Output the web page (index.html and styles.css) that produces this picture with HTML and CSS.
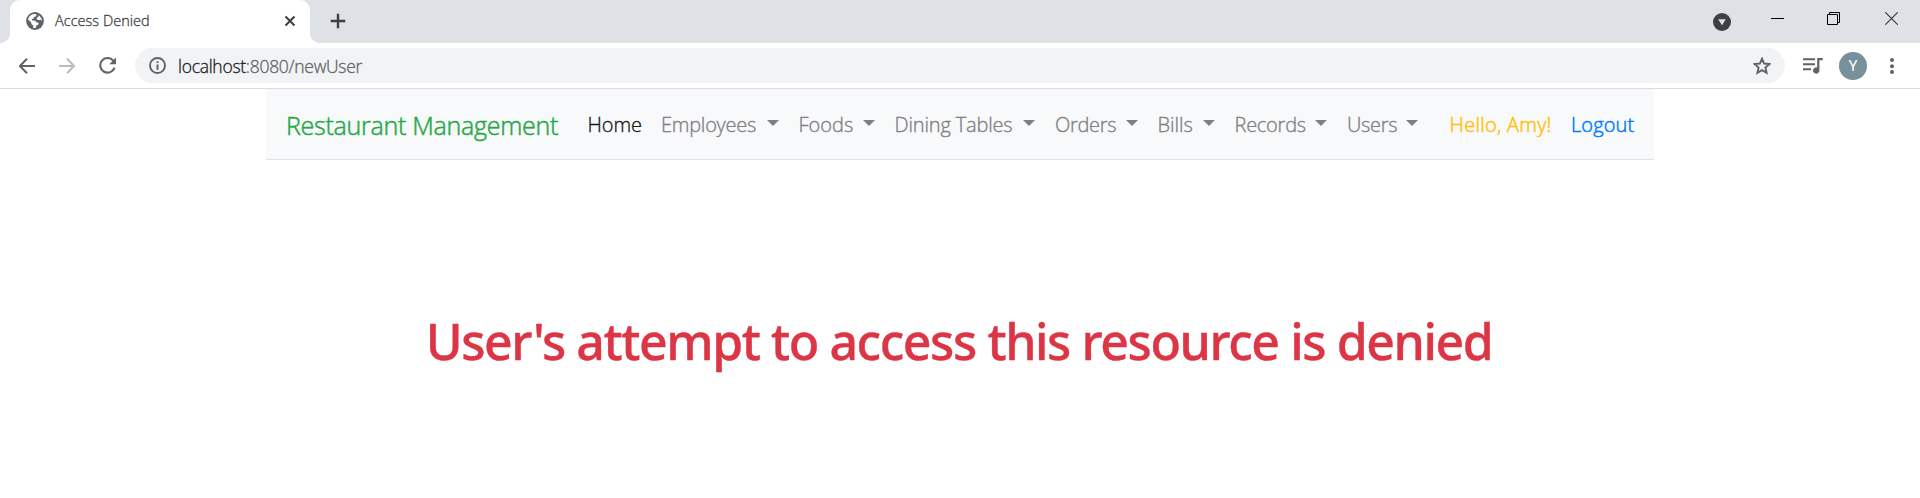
FILE: index.html
```
<!DOCTYPE html>
<html lang="en">
<head>
<meta charset="utf-8">
<title>Access Denied</title>
<link rel="stylesheet" href="styles.css">
</head>
<body>
<header class="tabstrip">
  <div class="corner corner-left"></div>
  <div class="tab">
    <svg class="globe" viewBox="0 0 18 18"><circle cx="9" cy="9" r="8.9" fill="#5f6368"/><path d="M7.300 2.100 10 1.900C10.600 2.900 10.500 4 9.500 4.400L8 4.900 7.600 6.400 5.600 7.200 6.200 8.500 9.300 8.700 10.800 10.600 12.700 10.800 12.300 12.400 10.500 13.400 9.600 15.900C8.600 16.100 8 16 7.200 15.900L7.300 13.600 5.400 12 5.200 10.300 2 7.600C2.600 4.800 4.600 2.700 7.300 2.100ZM12.300 3.200C14.500 4.400 16 6.600 16 9L14.600 7.400 12.300 8.300 10.500 7 11.200 5.500 12.500 5Z" fill="#fff"/></svg>
    <span class="tab-title">Access Denied</span>
    <svg class="tab-close" viewBox="0 0 12 12"><path d="M1.500 1.500 10.500 10.500M10.500 1.500 1.500 10.500" stroke="#3c4043" stroke-width="2.100"/></svg>
  </div>
  <div class="corner corner-right"></div>
  <svg class="new-tab" viewBox="0 0 16 16"><path d="M8 .7V15.300M.7 8H15.300" stroke="#3c4043" stroke-width="2.400"/></svg>
  <div class="window-controls">
    <svg width="18" height="18" viewBox="0 0 18 18" class="search-tabs"><circle cx="9" cy="9" r="9" fill="#3c4043"/><path d="M5.200 6.200H12.800L9 12.200Z" fill="#dee1e6"/></svg>
    <svg width="13" height="13" viewBox="0 0 13 13"><path d="M0 6.500H13" stroke="#000"/></svg>
    <svg width="13" height="13" viewBox="0 0 13 13"><path d="M.5 2.500H10.500V12.500H.5ZM2.500 2.500V.5H12.500V10.500H10.500" fill="none" stroke="#000"/></svg>
    <svg class="win-close" width="13" height="13" viewBox="0 0 13 13"><path d="M.3 .3 12.700 12.700M12.700 .3 .3 12.700" stroke="#333" stroke-width="1.100"/></svg>
  </div>
</header>
<div class="toolbar">
  <svg width="16" height="16" viewBox="0 0 16 16" fill="none" stroke="#5f6368" stroke-width="2"><path d="M16 8H1.500M8 .8 .9 8 8 15.200"/></svg>
  <svg width="16" height="16" viewBox="0 0 16 16" fill="none" stroke="#babcbe" stroke-width="2"><path d="M0 8H14.500M8 .8 15.100 8 8 15.200"/></svg>
  <svg width="17" height="17" viewBox="0 0 17 17"><path d="M14.200 3.700A7.300 7.300 0 1 0 15.500 10.600" fill="none" stroke="#5f6368" stroke-width="2.100"/><path d="M17 .6V7.300H10.300Z" fill="#5f6368"/></svg>
  <div class="omnibox">
    <svg width="17" height="17" viewBox="0 0 17 17"><circle cx="8.500" cy="8.500" r="7.500" fill="none" stroke="#5f6368" stroke-width="1.900"/><path d="M7.500 7.500H9.500V12.800H7.500ZM7.500 4.200H9.500V6H7.500Z" fill="#5f6368"/></svg>
    <span class="url"><span class="host">localhost</span>:8080/newUser</span>
    <svg class="star" width="18" height="18" viewBox="0 0 18 18"><path d="M9 1.600 11.100 6.500 16.500 7 12.400 10.500 13.600 15.900 9 13.100 4.400 15.900 5.600 10.500 1.500 7 6.900 6.500Z" fill="none" stroke="#5f6368" stroke-width="1.900"/></svg>
  </div>
  <svg class="media" width="20" height="16" viewBox="0 0 20 16"><path d="M0 1.200H12M0 6.200H12M0 11.200H8" stroke="#5f6368" stroke-width="2"/><path d="M14.200 0H19.700V2.300H16.400V12.400A3.200 3.200 0 1 1 14.200 9.400Z" fill="#5f6368"/></svg>
  <div class="avatar">Y</div>
  <svg class="menu" width="4" height="16" viewBox="0 0 4 16" fill="#5f6368"><circle cx="2" cy="2" r="2"/><circle cx="2" cy="8.200" r="2"/><circle cx="2" cy="14" r="2"/></svg>
</div>
<main class="container">
  <nav class="navbar">
    <a class="brand">Restaurant Management</a>
    <a class="item home">Home</a>
    <a class="item drop employees">Employees</a>
    <a class="item drop foods">Foods</a>
    <a class="item drop tables">Dining Tables</a>
    <a class="item drop orders">Orders</a>
    <a class="item drop bills">Bills</a>
    <a class="item drop records">Records</a>
    <a class="item drop users">Users</a>
    <span class="item hello">Hello, Amy!</span>
    <a class="item logout">Logout</a>
  </nav>
  <h1 class="message">User's attempt to access this resource is denied</h1>
</main>
</body>
</html>
```
FILE: styles.css
```
* { box-sizing: border-box; }
body { margin: 0; background: #fff; font-family: "Open Sans", "Noto Sans", sans-serif; overflow: hidden; }
svg { display: block; flex: none; }

.tabstrip { display: flex; height: 43px; background: #dee1e6; }
.corner { width: 10px; height: 43px; flex: none; }
.corner-left { background: radial-gradient(circle at 0 0, #dee1e6 9.500px, #fff 10.500px) 0 33px / 10px 10px no-repeat; }
.corner-right { background: radial-gradient(circle at 100% 0, #dee1e6 9.500px, #fff 10.500px) 0 33px / 10px 10px no-repeat; }
.tab { width: 300px; height: 43px; display: flex; align-items: center; padding: 0 14px 1px 16px; background: #fff; border-radius: 10px 10px 0 0; }
.globe { width: 18px; height: 18px; }
.tab-title { margin-left: 11px; font-size: 14.500px; font-weight: 300; color: #3c4043; -webkit-text-stroke: .3px; letter-spacing: .03px; line-height: 20px; }
.tab-close { width: 12px; height: 12px; margin-left: auto; }
.new-tab { width: 16px; height: 16px; margin: 13px 0 0 10px; }
.window-controls { display: flex; margin-left: auto; padding: 12px 22px 0 0; gap: 43px; }
.search-tabs { margin: 1px -3px 0 0; }
.win-close { margin-left: 2px; }

.toolbar { display: flex; align-items: center; height: 46px; padding-left: 19px; gap: 24px; border-bottom: 1px solid #dadce0; background: #fff; }
.omnibox { display: flex; align-items: center; width: 1650px; height: 35px; margin-left: -5px; padding: 0 14px; border-radius: 18px; background: #f1f3f4; }
.url { margin-left: 12px; font-size: 17.500px; font-weight: 300; line-height: 24px; color: #5f6368; -webkit-text-stroke: .3px; letter-spacing: -.28px; }
.host { color: #202124; }
.star { margin-left: auto; }
.media { margin-left: -6px; }
.avatar { width: 28px; height: 28px; margin-left: -8px; border-radius: 50%; background: #78909c; color: #fff; font: 15px/28px Roboto, sans-serif; text-align: center; }
.menu { margin-left: -1px; }

.container { width: 1388px; margin: 0 auto; }
.navbar { display: flex; align-items: center; height: 71px; padding-left: 20px; gap: 19.500px; background: #f8f9fa; border-bottom: 1px solid #dee2e6; }
.brand { width: 282px; padding-top: 2px; font-size: 25px; font-weight: 300; line-height: 34px; letter-spacing: -.27px; color: #28a745; white-space: nowrap; -webkit-text-stroke: .5px; }
.item { flex: none; padding-top: 2px; font-size: 20px; font-weight: 300; line-height: 28px; color: #808081; white-space: nowrap; -webkit-text-stroke: .35px; }
.home { width: 53.500px; color: #18191a; letter-spacing: -.1px; }
.drop { display: flex; justify-content: space-between; align-items: center; text-indent: .5px; }
.drop::after { content: ""; border: 6px solid transparent; border-top-color: #7f7f80; border-bottom: 0; margin-top: -5px; }
.employees { width: 118px; letter-spacing: -.25px; }
.foods { width: 76.500px; }
.tables { width: 141px; letter-spacing: -.17px; }
.orders { width: 83px; letter-spacing: -.3px; }
.bills { width: 57.500px; }
.records { width: 93px; letter-spacing: -.25px; }
.users { width: 71px; letter-spacing: -.3px; }
.hello { width: 102px; margin-left: 12.500px; color: #ffc107; letter-spacing: .26px; -webkit-text-stroke: .5px; }
.logout { color: #007bff; letter-spacing: .1px; -webkit-text-stroke: .5px; }
.message { margin: 146px 0 0 -2px; font: 500 50px/70px "Noto Sans", sans-serif; letter-spacing: -1.430px; text-align: center; white-space: nowrap; color: #dc3545; -webkit-text-stroke: .4px; }
```
